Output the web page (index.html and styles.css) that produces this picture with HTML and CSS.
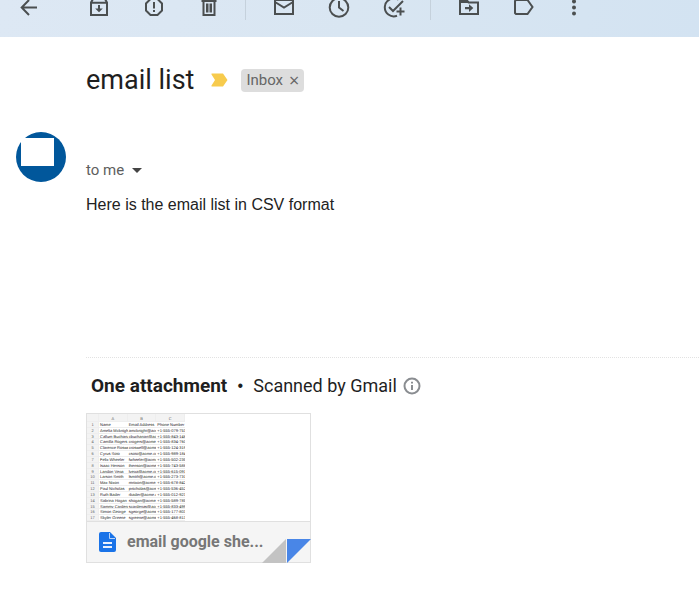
FILE: index.html
```html
<!DOCTYPE html>
<html lang="en">
<head>
<meta charset="utf-8">
<title>email list</title>
<link rel="stylesheet" href="styles.css">
</head>
<body>
<nav class="toolbar" aria-label="Message actions">
  <button class="tool back" aria-label="Back"><svg viewBox="0 0 24 24"><path d="M20 12.500H5M12 5l-7.300 7.500L12 20" class="line"/></svg></button>
  <button class="tool" aria-label="Archive"><svg viewBox="0 0 24 24"><path d="M4 7.500 6 4h12l2 3.500V20H4zM4 7.700h16" class="line"/><path d="M11 10h2v3.500h2.800L12 17.300 8.200 13.500H11z"/></svg></button>
  <button class="tool" aria-label="Report spam"><svg viewBox="0 0 24 24"><path d="M8.500 4h7L20 8.500v7L15.500 20h-7L4 15.500v-7z" class="line"/><path d="M11 7h2v6.500h-2zM11 15h2v2h-2z"/></svg></button>
  <button class="tool" aria-label="Delete"><svg viewBox="0 0 24 24"><path d="M4.500 6h15M9 4.500h6M6.500 6v14h11V6" class="line"/><path d="M9 8.500h2.500v9H9zM12.500 8.500H15v9h-2.500z"/></svg></button>
  <span class="divider"></span>
  <button class="tool" aria-label="Mark as unread"><svg viewBox="0 0 24 24"><path d="M3 5h18v14H3zM3 7l9 5.500L21 7" class="line"/></svg></button>
  <button class="tool" aria-label="Snooze"><svg viewBox="0 0 24 24"><circle cx="12" cy="12.500" r="9.300" class="line"/><path d="M12 6v6.500l4.500 3.500" class="line"/></svg></button>
  <button class="tool" aria-label="Add to tasks"><svg viewBox="0 0 24 24"><path d="M15 20.800A9 9 0 1 1 16.500 4.700M7 12l4 4L21 6M18.500 12.500v8M14.500 16.500h8" class="line"/></svg></button>
  <span class="divider"></span>
  <button class="tool" aria-label="Move to"><svg viewBox="0 0 24 24"><path d="M3 5h6.500l2 2.500H21V19H3z" class="line"/><path d="M2 4h8l3 4H2zM8 12h4V9.200l4.300 3.900L12 17v-2.800H8z"/></svg></button>
  <button class="tool" aria-label="Labels"><svg viewBox="0 0 24 24"><path d="M4 5h11.500l5 7-5 7H4l-1-1V6z" class="line"/></svg></button>
  <button class="tool more" aria-label="More"><svg viewBox="0 0 24 24"><circle cx="12" cy="6.500" r="2"/><circle cx="12" cy="12.500" r="2"/><circle cx="12" cy="18.500" r="2"/></svg></button>
</nav>
<main class="message">
  <header class="heading">
    <h1>email list</h1>
    <svg class="important" viewBox="0 0 17 14" role="img" aria-label="Important"><path d="M1 .5h11L16.500 7 12 13.500H1q-1 0-.5-1L4 7 .5 1.500Q0 .5 1 .5z"/></svg>
    <span class="chip">Inbox <button aria-label="Remove label Inbox">×</button></span>
  </header>
  <div class="avatar"><span></span></div>
  <section class="content">
    <button class="recipient">to me <svg viewBox="0 0 10 5"><path d="M0 0h10L5 5z"/></svg></button>
    <p class="text">Here is the email list in CSV format</p>
    <section class="attachments">
      <h2><strong>One attachment</strong><span class="dot">•</span><span>Scanned by Gmail</span>
        <svg viewBox="0 0 18 18"><circle cx="9" cy="9" r="7.500"/><path d="M9 8v5M9 4.800v1.700"/></svg></h2>
      <a class="file" href="#">
        <span class="preview">
          <table>
            <thead><tr><th></th><th>A</th><th>B</th><th>C</th></tr></thead>
            <tbody>
              <tr><th>1</th><td>Name</td><td>Email Address</td><td>Phone Number</td></tr>
              <tr><th>2</th><td>Amelia Mcknight</td><td>amcknight@acm</td><td>+1-555-079-7538</td></tr>
              <tr><th>3</th><td>Callum Buchanan</td><td>cbuchanan@acm</td><td>+1-555-843-1482</td></tr>
              <tr><th>4</th><td>Camilla Rogers</td><td>crogers@acme.c</td><td>+1-555-834-7603</td></tr>
              <tr><th>5</th><td>Clarence Roswell</td><td>croswell@acme.</td><td>+1-555-124-3194</td></tr>
              <tr><th>6</th><td>Cyrus Soto</td><td>csoto@acme.cor</td><td>+1-555-989-1848</td></tr>
              <tr><th>7</th><td>Felix Wheeler</td><td>fwheeler@acme.</td><td>+1-555-502-2356</td></tr>
              <tr><th>8</th><td>Isaac Henson</td><td>ihenson@acme.c</td><td>+1-555-743-5884</td></tr>
              <tr><th>9</th><td>Landon Vega</td><td>lvega@acme.com</td><td>+1-555-615-0914</td></tr>
              <tr><th>10</th><td>Larson Smith</td><td>lsmith@acme.co</td><td>+1-555-273-7317</td></tr>
              <tr><th>11</th><td>Max Nixon</td><td>mnixon@acme.c</td><td>+1-555-678-8422</td></tr>
              <tr><th>12</th><td>Paul Nicholas</td><td>pnicholas@acm</td><td>+1-555-536-4522</td></tr>
              <tr><th>13</th><td>Ruth Bader</td><td>rbader@acme.c</td><td>+1-555-012-9231</td></tr>
              <tr><th>14</th><td>Sabrina Hogan</td><td>shogan@acme.c</td><td>+1-555-589-7856</td></tr>
              <tr><th>15</th><td>Sammy Cardenas</td><td>scardenas@acm</td><td>+1-555-833-4992</td></tr>
              <tr><th>16</th><td>Simon George</td><td>sgeorge@acme.</td><td>+1-555-177-8036</td></tr>
              <tr><th>17</th><td>Skyler Greene</td><td>sgreene@acme.</td><td>+1-555-468-8136</td></tr>
            </tbody>
          </table>
        </span>
        <span class="caption">
          <svg class="doc" viewBox="0 0 17 20"><path d="M2 0h9l6 6v12q0 2-2 2H2q-2 0-2-2V2q0-2 2-2z" fill="#1a73e8"/><path d="M10.500 1v5.500H16" fill="none" stroke="#b9d3f8"/><path d="M4 11h9M4 15h9" stroke="#e8f0fe" stroke-width="2"/></svg>
          <span class="name">email google she...</span>
        </span>
        <svg class="fold" viewBox="0 0 49 24"><path d="M0 24 24 0v24z" fill="#c3c3c3"/><path d="M25 0h24L25 24z" fill="#4986e7"/></svg>
      </a>
    </section>
  </section>
</main>
</body>
</html>
```
FILE: styles.css
```css
* { box-sizing: border-box; }
body { margin: 0; background: #fff; color: #1f1f1f; font-family: Roboto, sans-serif; }
button { border: 0; padding: 0; background: none; color: inherit; font: inherit; }

.toolbar {
  display: flex;
  align-items: flex-start;
  height: 37px;
  padding-left: 1px;
  overflow: hidden;
  background: linear-gradient(100deg, #dde8f4, #d9e6f2 50%, #d3e3f2);
}
.tool { flex: none; width: 55px; height: 24px; margin-top: -5px; }
.tool svg { display: block; width: 24px; height: 24px; margin: 0 auto; fill: #4b4f50; }
.tool .line { fill: none; stroke: #4b4f50; stroke-width: 2; }
.back { margin-right: 15px; }
.more { width: 45px; }
.divider { flex: none; width: 1px; height: 20px; margin: 0 10px 0 9px; background: #c5d1dc; }

.message {
  display: grid;
  grid-template-columns: 50px 1fr;
  column-gap: 20px;
  padding: 25px 0 0 16px;
}
.heading { grid-column: 2; display: flex; align-items: center; height: 36px; }
h1 { margin: 0; font-size: 27px; font-weight: 400; line-height: 36px; }
.important { width: 17px; height: 14px; margin: 0 13px 0 17px; fill: #f7cb4d; }
.chip {
  display: flex;
  align-items: center;
  gap: 6px;
  height: 23px;
  padding: 0 5px;
  border-radius: 4px;
  background: #ddd;
  color: #666;
  font-size: 15px;
}
.chip button { font: 18px/20px "Open Sans", sans-serif; }
.avatar {
  width: 50px;
  height: 50px;
  margin-top: 34px;
  padding: 6px 0 0 5px;
  border-radius: 50%;
  background: #01579b;
}
.avatar span { display: block; width: 33px; height: 28px; background: #fff; }
.content { padding-top: 62px; min-width: 0; }
.recipient { display: flex; align-items: center; gap: 8px; color: #5e5e5e; font-size: 15px; line-height: 20px; }
.recipient svg { width: 10px; height: 5px; fill: #444; }
.text { margin: 15px 0 0; font: 16px/20px "Liberation Sans", Arial, sans-serif; color: #222; }
.attachments { margin-top: 142px; padding-top: 16px; border-top: 1px dotted #e2e2e2; }
h2 { display: flex; align-items: center; margin: 0 0 15px 5px; font-size: 18px; font-weight: 400; line-height: 24px; }
h2 strong { font-size: 19px; }
.dot { width: 26px; text-align: center; font-family: "Liberation Sans", Arial, sans-serif; font-size: 16px; }
h2 svg { width: 18px; height: 18px; margin-left: 6px; fill: none; stroke: #8a8d91; stroke-width: 2; }

.file {
  position: relative;
  display: block;
  width: 225px;
  border: 1px solid #e0e0e0;
  color: #777;
  text-decoration: none;
}
.preview { display: block; }
table {
  display: grid;
  grid-template-columns: 12px repeat(3, 1fr);
  grid-template-rows: 8px repeat(17, minmax(0, 1fr));
  width: 98px;
  height: 107px;
  color: #222;
  font: 4px/5px "Liberation Sans", Arial, sans-serif;
  text-rendering: geometricPrecision;
}
thead, tbody, tr { display: contents; }
th, td {
  min-width: 0;
  padding: 0;
  overflow: hidden;
  white-space: nowrap;
  border: 0 solid #eee;
  border-width: 0 1px 1px 0;
}
th { background: #f3f3f3; color: #666; font-weight: 400; text-align: center; }
thead th { padding-top: 2px; }
td { padding-left: 1px; border-right-width: 0; }
.caption {
  display: flex;
  align-items: center;
  gap: 11px;
  height: 41px;
  padding: 0 0 1px 12px;
  border-top: 1px solid #e0e0e0;
  background: #f5f5f5;
}
.doc { width: 17px; height: 20px; }
.name { font-size: 16px; font-weight: 700; }
.fold { position: absolute; right: -1px; bottom: -1px; width: 49px; height: 24px; }
```
